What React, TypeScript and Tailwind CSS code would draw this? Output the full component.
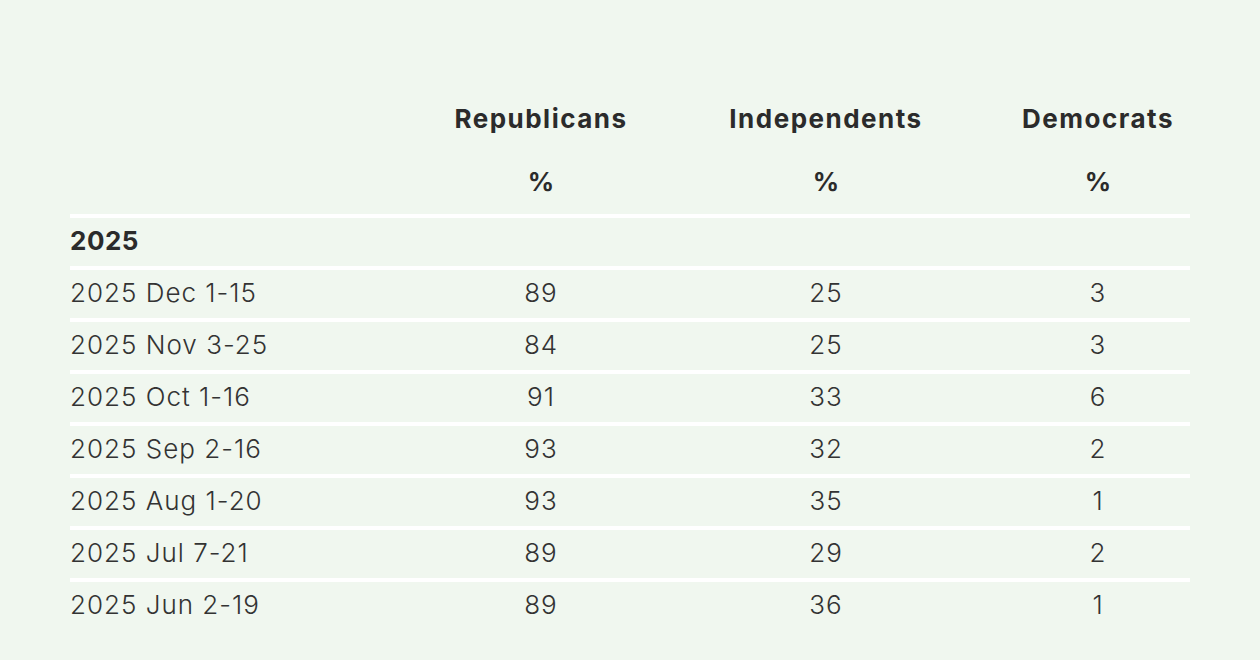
const rows = [
  { label: '2025 Dec 1-15', r: '89', i: '25', d: '3' },
  { label: '2025 Nov 3-25', r: '84', i: '25', d: '3' },
  { label: '2025 Oct 1-16', r: '91', i: '33', d: '6' },
  { label: '2025 Sep 2-16', r: '93', i: '32', d: '2' },
  { label: '2025 Aug 1-20', r: '93', i: '35', d: '1' },
  { label: '2025 Jul 7-21', r: '89', i: '29', d: '2' },
  { label: '2025 Jun 2-19', r: '89', i: '36', d: '1' },
];

const cols = 'grid grid-cols-[366px_210px_360px_184px]';

export default function App() {
  return (
    <div className="min-h-[660px] w-full bg-[#f0f7ef] pt-[88px] pl-[70px] font-['Inter','Liberation_Sans',sans-serif] text-[#2b2b2b]">
      <div className="w-[1120px]">
        {/* header */}
        <div className={`${cols} h-[62px] items-center pb-[1px] text-[26px] font-bold tracking-[1.5px]`}>
          <div />
          <div className="text-center">Republicans</div>
          <div className="text-center">Independents</div>
          <div className="text-center">Democrats</div>
        </div>
        <div className={`${cols} h-[64px] items-center pb-[2px] text-[26px] font-bold`}>
          <div />
          <div className="text-center">%</div>
          <div className="text-center">%</div>
          <div className="text-center">%</div>
        </div>

        <div className="h-[4px] bg-white" />
        <div className="flex h-[48px] items-center pb-[3px] text-[26px] font-bold tracking-[0.5px]">2025</div>

        {rows.map((row) => (
          <div key={row.label}>
            <div className="h-[4px] bg-white" />
            <div className={`${cols} h-[48px] items-center pb-[3px] text-[26px] font-light tracking-[1px] text-[#333]`}>
              <div>{row.label}</div>
              <div className="text-center">{row.r}</div>
              <div className="text-center">{row.i}</div>
              <div className="text-center">{row.d}</div>
            </div>
          </div>
        ))}
      </div>
    </div>
  );
}
